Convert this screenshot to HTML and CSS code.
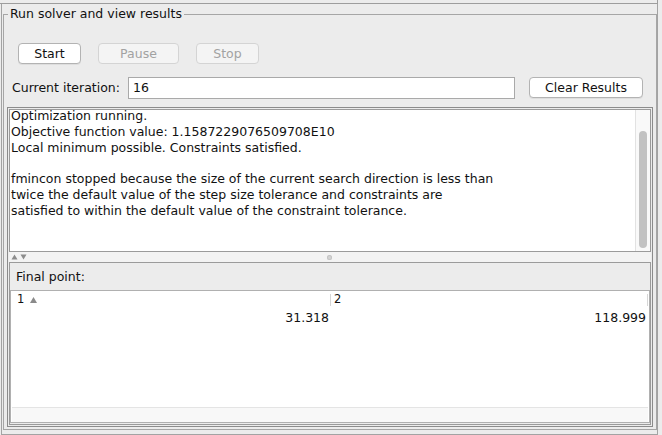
FILE: index.html
```html
<!DOCTYPE html>
<html>
<head>
<meta charset="utf-8">
<title>Run solver and view results</title>
<link rel="stylesheet" href="styles.css">
</head>
<body>
<div class="stub"></div>
<div class="frame">
  <div class="group">
    <span class="group-title">Run solver and view results</span>
    <div class="btn-row">
      <button class="btn w-start">Start</button>
      <button class="btn w-pause" disabled>Pause</button>
      <button class="btn w-stop" disabled>Stop</button>
    </div>
    <div class="iter-row">
      <span class="iter-label">Current iteration:</span>
      <div class="field">16</div>
      <button class="btn btn-clear">Clear Results</button>
    </div>
    <div class="split">
      <div class="log">
        <div class="log-view"><div class="log-text">Optimization running.
Objective function value: 1.1587229076509708E10
Local minimum possible. Constraints satisfied.

fmincon stopped because the size of the current search direction is less than
twice the default value of the step size tolerance and constraints are
satisfied to within the default value of the constraint tolerance.
</div></div>
        <div class="vscroll"><div class="thumb"></div></div>
      </div>
      <div class="divider">
        <svg class="arrows" width="16" height="6" viewBox="0 0 16 6"><polygon points="0.5,5.5 3.5,0.5 6.5,5.5" fill="#8c8c8c"/><polygon points="9.5,0.5 15.5,0.5 12.5,5.5" fill="#8c8c8c"/></svg>
        <span class="dot"></span>
      </div>
      <div class="results">
        <div class="results-label">Final point:</div>
        <div class="table">
          <div class="thead">
            <div class="th th1">1 <svg class="sort" width="7" height="6" viewBox="0 0 7 6"><polygon points="0,6 3.5,0 7,6" fill="#8a8a8a"/></svg></div>
            <div class="th th2">2</div>
          </div>
          <div class="trow">
            <div class="td td1">31.318</div>
            <div class="td td2">118.999</div>
          </div>
          <div class="spacer"></div>
          <div class="hscroll"></div>
        </div>
      </div>
    </div>
  </div>
</div>
</body>
</html>
```
FILE: styles.css
```css
html, body {
  margin: 0;
  padding: 0;
}
body {
  background: #ececec;
  width: 662px;
  height: 435px;
  overflow: hidden;
  font-family: "DejaVu Sans", "Liberation Sans", sans-serif;
  font-size: 12.5px;
  color: #111;
}
.stub {
  height: 3px;
  width: 657px;
  border-bottom: 1px solid #9d9d9d;
  border-right: 1px solid #9d9d9d;
}
.frame {
  margin-left: 1px;
  width: 657px;
  height: 431px;
  box-sizing: border-box;
  border: 1px solid #a3a3a3;
  border-top: none;
  padding: 10px 0 0 1px;
}
.group {
  position: relative;
  box-sizing: border-box;
  width: 654px;
  height: 416px;
  border: 1px solid #a6a6a6;
}
.group-title {
  position: absolute;
  top: -9px;
  left: 4px;
  padding: 0 2px;
  line-height: 16px;
  background: #ececec;
  white-space: nowrap;
}
.btn-row {
  display: flex;
  gap: 17px;
  margin: 28px 0 0 14px;
}
.btn {
  box-sizing: border-box;
  height: 21px;
  padding: 0;
  border: 1px solid #b3b3b3;
  border-radius: 4px;
  background: #fff;
  font-family: "DejaVu Sans", "Liberation Sans", sans-serif;
  font-size: 12.5px;
  color: #111;
  box-shadow: 0 1px 0 rgba(0, 0, 0, 0.06);
}
.btn:disabled {
  background: #f4f4f4;
  border-color: #d4d4d4;
  color: #a2a2a2;
  box-shadow: none;
}
.w-start { width: 63px; }
.w-pause { width: 81px; }
.w-stop { width: 63px; }
.iter-row {
  display: flex;
  align-items: flex-start;
  margin: 13px 0 0 8px;
  height: 22px;
}
.iter-label {
  width: 116px;
  line-height: 22px;
  white-space: nowrap;
}
.field {
  box-sizing: border-box;
  width: 387px;
  height: 22px;
  border: 1px solid #a9a9a9;
  background: #fff;
  padding-left: 4px;
  line-height: 20px;
}
.btn-clear {
  margin-left: 14px;
  width: 114px;
}
.split {
  margin: 8px 0 0 3px;
  width: 646px;
  height: 320px;
  box-sizing: border-box;
  border: 1px solid #8c8c8c;
  padding: 1px;
  display: flex;
  flex-direction: column;
}
.log {
  height: 143px;
  flex: none;
  box-sizing: border-box;
  border: 1px solid #9b9b9b;
  background: #fff;
  display: flex;
}
.log-view {
  flex: 1;
  overflow: hidden;
  padding-left: 1px;
}
.log-text {
  margin-top: -2px;
  font-size: 12.5px;
  line-height: 15.8px;
  white-space: pre;
  color: #111;
}
.vscroll {
  width: 15px;
  box-sizing: border-box;
  border-left: 1px solid #e2e2e2;
  background: #f9f9f9;
  padding: 21px 0 0 3px;
}
.thumb {
  width: 8px;
  height: 117px;
  border-radius: 4px;
  background: #c2c2c2;
}
.divider {
  height: 10px;
  flex: none;
  display: flex;
  align-items: center;
  background: #f3f3f3;
}
.arrows {
  margin-left: 2px;
  display: block;
}
.dot {
  display: block;
  margin-left: 300px;
  width: 5px;
  height: 5px;
  border-radius: 50%;
  background: #d4d4d4;
  box-shadow: inset 0 0 0 1px #c4c4c4;
}
.results {
  flex: 1;
  box-sizing: border-box;
  border: 1px solid #9b9b9b;
  display: flex;
  flex-direction: column;
  background: #ececec;
}
.results-label {
  height: 27px;
  flex: none;
  padding-left: 6px;
  line-height: 28px;
}
.table {
  flex: 1;
  margin-bottom: 1px;
  border: 1px solid #b0b0b0;
  background: #fff;
  display: flex;
  flex-direction: column;
}
.thead {
  display: flex;
  height: 16px;
  flex: none;
}
.th {
  position: relative;
  box-sizing: border-box;
  font-size: 11.5px;
  line-height: 16px;
  white-space: nowrap;
}
.th::after {
  content: "";
  position: absolute;
  right: 0;
  top: 3px;
  bottom: 1px;
  width: 1px;
  background: #d6d6d6;
}
.th1 {
  width: 320px;
  padding-left: 6px;
}
.th2 {
  width: 317px;
  padding-left: 3px;
}
.sort {
  margin-left: 2px;
  vertical-align: 0px;
}
.trow {
  display: flex;
  height: 17px;
  margin-top: 2px;
  flex: none;
}
.td {
  box-sizing: border-box;
  text-align: right;
  padding-right: 2px;
  line-height: 17px;
}
.td1 { width: 320px; }
.td2 { width: 317px; }
.spacer {
  flex: 1;
}
.hscroll {
  height: 15px;
  flex: none;
  margin: 0 1px;
  box-sizing: border-box;
  border-top: 1px solid #e4e4e4;
  background: #f8f8f8;
}
```
